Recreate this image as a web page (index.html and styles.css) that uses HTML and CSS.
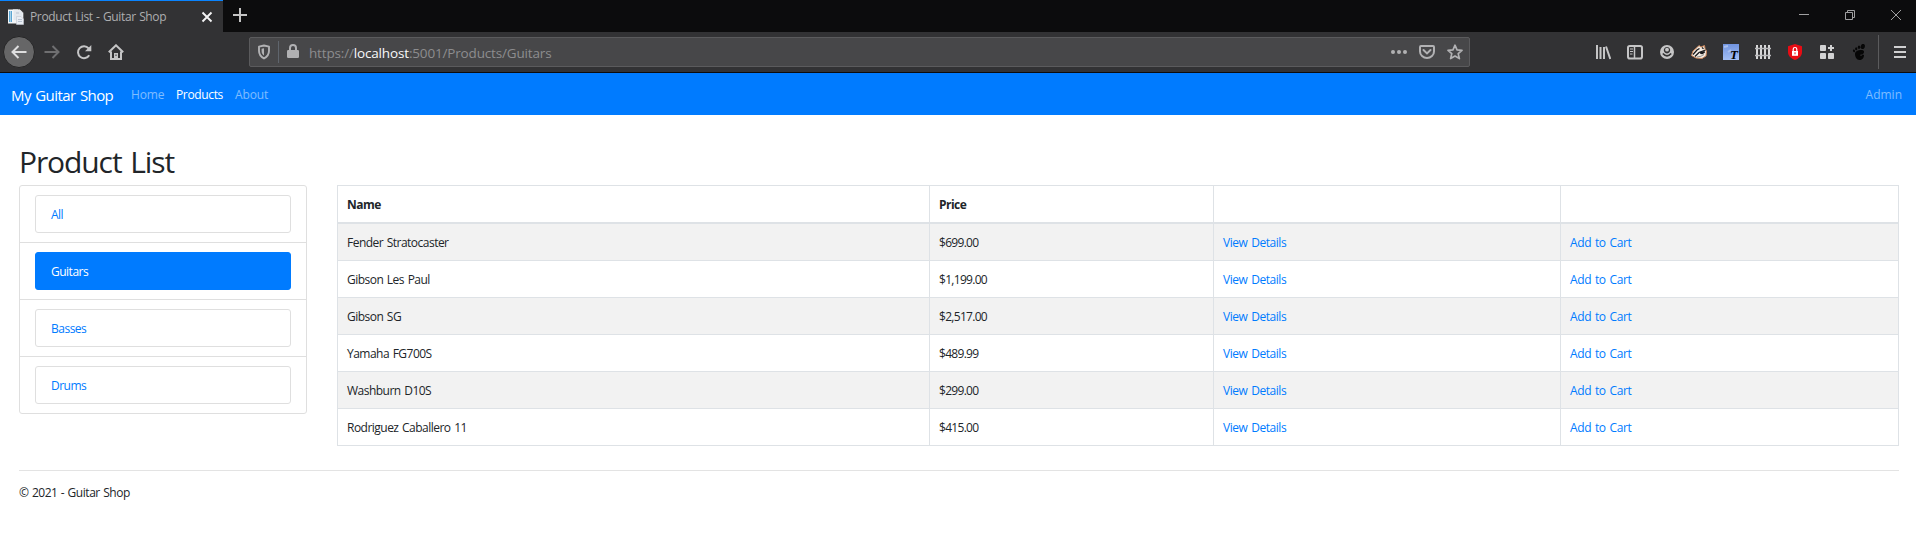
FILE: index.html
```
<!DOCTYPE html>
<html lang="en">
<head>
<meta charset="utf-8">
<title>Product List - Guitar Shop</title>
<link rel="stylesheet" href="styles.css">
</head>
<body>
<header class="browser">
  <div class="tabs">
    <div class="tab">
      <svg class="favicon" width="16" height="16" viewBox="0 0 16 16"><path fill="#f3f6f8" d="M0 .5h10v14H0z"/><path fill="#5aa5d2" d="M1 2h3v11H1z"/><path fill="#a6d0e8" d="M2 2h1v11H2z"/><path fill="#e3e8ee" stroke="#fff" stroke-width=".6" d="M5 .8h7l3 3v8H5z"/><path fill="#e9edf3" stroke="#c2c8d2" stroke-width=".6" d="M8.500 7.500H13l2.500 2.500v5.500h-7z"/><path stroke="#b7c2d1" d="M8 4h3M10 10.500h4M10 12.500h4"/></svg>
      <span class="tab-title">Product List - Guitar Shop</span>
      <svg class="tab-close" width="12" height="12" viewBox="0 0 12 12"><path d="M1.500 1.500l9 9M10.500 1.500l-9 9" stroke="#f4f4f5" stroke-width="1.900"/></svg>
    </div>
    <svg class="new-tab" width="14" height="14" viewBox="0 0 14 14"><path d="M7 0v14M0 7h14" stroke="#c4c4c4" stroke-width="2"/></svg>
    <div class="window-buttons">
      <svg width="12" height="12" viewBox="0 0 12 12"><path d="M1 5.500h10"/></svg>
      <svg width="12" height="12" viewBox="0 0 12 12"><path d="M1.500 3.500h7v7h-7zM3.500 3.500v-2h7v7h-2"/></svg>
      <svg width="12" height="12" viewBox="0 0 12 12"><path d="M1 1l10 10M11 1L1 11"/></svg>
    </div>
  </div>
  <div class="toolbar">
    <div class="nav-buttons">
      <span class="back"><svg width="16" height="16" viewBox="0 0 16 16"><path d="M15.500 8H1.500M7.500 2L1.500 8l6 6"/></svg></span>
      <svg class="forward" width="16" height="16" viewBox="0 0 16 16"><path d="M.5 8h14M8.500 2l6 6-6 6"/></svg>
      <svg width="16" height="16" viewBox="0 0 16 16"><path d="M13.200 11.200A6 6 0 1 1 12.600 4.300"/><path d="M15.300 1v6.300H9z" fill="#c5c5c6" stroke="none"/></svg>
      <svg width="16" height="16" viewBox="0 0 16 16"><path d="M.8 8.300L8 1.300l7.200 7M3 7.500V15h10V7.500"/><path d="M6 9h4v6H6z" fill="#c5c5c6" stroke="none"/><path d="M7.500 10.500h1v1.500h-1z" fill="#323234" stroke="none"/></svg>
    </div>
    <div class="urlbar">
      <svg class="tracking" width="14" height="16" viewBox="0 0 14 16"><path d="M7 1.500L2 2.700v4C2 10.500 3.800 12.700 7 14.500c3.200-1.800 5-4 5-7.800v-4z" fill="none" stroke="#b1b1b3" stroke-width="1.900" stroke-linejoin="round"/><path d="M7 4.200L4.600 4.800v2.300C4.600 9.300 5.500 10.500 7 11.600z" fill="#b1b1b3"/></svg>
      <span class="url-divider"></span>
      <svg class="lock" width="12" height="14" viewBox="0 0 12 14"><rect y="6" width="12" height="8" rx="1.200" fill="#b1b1b3"/><path d="M3 7V4a3 3 0 0 1 6 0v3" fill="none" stroke="#b1b1b3" stroke-width="2"/></svg>
      <span class="url">https://<b>localhost</b>:5001/Products/Guitars</span>
      <div class="page-actions">
        <svg width="16" height="16" viewBox="0 0 16 16"><g fill="#b1b1b3" stroke="none"><circle cx="2" cy="8" r="2"/><circle cx="8" cy="8" r="2"/><circle cx="14" cy="8" r="2"/></g></svg>
        <svg width="16" height="16" viewBox="0 0 16 16"><path d="M2 2h12q1 0 1 1v4.500a7 6.500 0 0 1-14 0V3q0-1 1-1z"/><path d="M4.500 6L8 9.400 11.500 6" stroke-linecap="round"/></svg>
        <svg width="16" height="16" viewBox="0 0 16 16"><path d="M8 1.200l2 4.600 5 .5-3.800 3.300L12.400 14.600 8 12l-4.400 2.600L4.800 9.600 1 6.300l5-.5z" stroke-linejoin="round" stroke-width="1.700"/></svg>
      </div>
    </div>
    <div class="extensions">
      <svg width="16" height="16" viewBox="0 0 16 16"><path d="M2 1v14M5.500 3v12M9 3v12M11 2.500L15.300 15"/></svg>
      <svg width="16" height="16" viewBox="0 0 16 16"><rect x="1" y="2" width="14" height="12.500" rx="1.800"/><path d="M7.500 2v12.500" stroke-width="1.500"/><path d="M3 5h3M3 7.500h3M3 10h2.500" stroke-width="1.200"/></svg>
      <svg width="16" height="16" viewBox="0 0 16 16"><circle cx="8" cy="8" r="7" fill="#c5c5c6" stroke="none"/><circle cx="8" cy="6.200" r="2.700" fill="none" stroke="#323234" stroke-width="0"/><path d="M5 3.900a3.200 3.200 0 1 0 6 0 3.200 3.200 0 0 0-6 0z" fill="#323234" stroke="none" transform="translate(0 1.200)"/><circle cx="8" cy="5.700" r="1.900" fill="#c5c5c6" stroke="none"/><path d="M3.800 9.500q4.200 4.800 8.400 0" stroke="#323234" stroke-width="1.600"/></svg>
      <svg width="16" height="16" viewBox="0 0 16 16"><path d="M.5 11.500L2 7 6 3.500 8 1.500 10 3l3.500-1.500L14 4.500 15.500 7l-.5 5-4 2.500L5 14z" fill="#f3ebe2" stroke="#c78256" stroke-width="1"/><path d="M2 10.500L6 6 8.500 4.500M4 12.500L8 8.500 14.500 6M11 3.500l1.500 1.200" stroke="#18181a" stroke-width="1.300"/><path d="M8.500 8L13.500 7l.5 1.500-2.500 1.700-2-.2z" fill="#18181a" stroke="none"/><path d="M6 13l4-.8 3-1.700" stroke="#777" stroke-width=".8"/></svg>
      <svg class="translate" width="16" height="16" viewBox="0 0 16 16"><defs><linearGradient id="sky" x1="0" y1="0" x2="0" y2="1"><stop offset="0" stop-color="#7194e0"/><stop offset="1" stop-color="#a3bff5"/></linearGradient></defs><path d="M0 0h16v16H0z" fill="url(#sky)" stroke="none"/><path d="M1 3l4-1M5 8l3-2" stroke="#a9c0ef" stroke-width="2"/><text x="7" y="15" class="glyph">T</text></svg>
      <svg width="16" height="16" viewBox="0 0 16 16"><path d="M2 1v14M6 1v14M10 1v14M14 1v14" stroke="#d7d7d8" stroke-width="2"/><path d="M0 4.500h16M0 11.500h16" stroke="#b9b9bb" stroke-width="1.500"/></svg>
      <svg width="16" height="16" viewBox="0 0 16 16"><path d="M8 0l7 2.300V8c0 4-3 6.500-7 8-4-1.500-7-4-7-8V2.300z" fill="#e80c14" stroke="none"/><path d="M5 7h6v4.800H5z" fill="#fff" stroke="none"/><path d="M6.200 7V5.300a1.800 1.800 0 0 1 3.600 0V7" stroke="#fff" stroke-width="1.200"/><path d="M8 8.300v2" stroke="#e80c14" stroke-width="1"/></svg>
      <svg width="16" height="16" viewBox="0 0 16 16"><g fill="#d2d2d3" stroke="none"><rect x="1" y="1" width="6" height="6" rx=".8"/><rect x="1" y="9" width="6" height="6" rx=".8"/><rect x="9" y="9" width="6" height="6" rx=".8"/></g><path d="M12 1v6M9 4h6" stroke="#d2d2d3" stroke-width="2"/></svg>
      <svg width="16" height="16" viewBox="0 0 16 16"><g fill="#060606" stroke="none"><ellipse cx="11.800" cy="2.500" rx="2" ry="2.600" transform="rotate(20 11.800 2.500)"/><ellipse cx="8" cy="3.300" rx="1.200" ry="1.700"/><ellipse cx="5.200" cy="4.800" rx="1.100" ry="1.500"/><ellipse cx="3" cy="6.900" rx="1" ry="1.400" transform="rotate(-20 3 6.900)"/><path d="M4 10c0-3 4-4.300 7-4 3 .4 2.300 3.500.4 4.300-1 .5-2.200.1-2.200.9 0 1 1.800.6 2.500-.7l1.300.5C13 14 11 16 8.500 16 5.500 16 4 12.500 4 10z"/></g></svg>
    </div>
    <span class="toolbar-divider"></span>
    <svg class="menu" width="12" height="12" viewBox="0 0 12 12"><path d="M0 1h12M0 6h12M0 11h12" stroke="#d0d0d1" stroke-width="2"/></svg>
  </div>
</header>

<nav class="navbar">
  <a class="brand">My Guitar Shop</a>
  <a class="nav-link home">Home</a>
  <a class="nav-link products active">Products</a>
  <a class="nav-link">About</a>
  <a class="nav-link admin">Admin</a>
</nav>

<main class="page">
  <h1 class="heading">Product List</h1>
  <div class="content">
    <ul class="categories">
      <li class="category"><a class="category-link">All</a></li>
      <li class="category"><a class="category-link selected">Guitars</a></li>
      <li class="category"><a class="category-link">Basses</a></li>
      <li class="category"><a class="category-link">Drums</a></li>
    </ul>
    <table class="products-table">
      <colgroup><col class="col-name"><col class="col-price"><col class="col-view"><col></colgroup>
      <thead><tr><th>Name</th><th>Price</th><th></th><th></th></tr></thead>
      <tbody>
        <tr><td>Fender Stratocaster</td><td class="price">$699.00</td><td class="view">View Details</td><td class="add">Add to Cart</td></tr>
        <tr><td>Gibson Les Paul</td><td class="price">$1,199.00</td><td class="view">View Details</td><td class="add">Add to Cart</td></tr>
        <tr><td>Gibson SG</td><td class="price">$2,517.00</td><td class="view">View Details</td><td class="add">Add to Cart</td></tr>
        <tr><td>Yamaha FG700S</td><td class="price">$489.99</td><td class="view">View Details</td><td class="add">Add to Cart</td></tr>
        <tr><td>Washburn D10S</td><td class="price">$299.00</td><td class="view">View Details</td><td class="add">Add to Cart</td></tr>
        <tr><td>Rodriguez Caballero 11</td><td class="price">$415.00</td><td class="view">View Details</td><td class="add">Add to Cart</td></tr>
      </tbody>
    </table>
  </div>
  <footer class="footer">© 2021 - Guitar Shop</footer>
</main>
</body>
</html>
```
FILE: styles.css
```
* { box-sizing: border-box; }
body { margin: 0; background: #fff; color: #212529; font: 12px/18px "Open Sans", "Noto Sans", sans-serif; overflow: hidden; }
svg { display: block; flex: none; }

/* Browser window */
.browser { height: 73px; background: #323234; border-bottom: 1px solid #0c0c0d; }
.tabs { display: flex; align-items: center; height: 32px; background: #0c0c0d; }
.tab { display: flex; align-items: center; width: 223px; height: 32px; padding-left: 8px; background: #323234; border-top: 1px solid #0a84ff; }
.tab-title { width: 170px; margin-left: 6px; color: #aeaeb0; letter-spacing: -.36px; word-spacing: .6px; white-space: nowrap; }
.tab-close { margin-left: 8px; margin-right: 10px; }
.favicon { margin-top: 1px; }
.new-tab { margin: 0 0 2px 10px; }
.window-buttons { display: flex; gap: 34px; margin: 0 14px 2px auto; fill: none; stroke: #a0a0a1; stroke-width: 1; }
.toolbar { display: flex; align-items: center; height: 40px; padding-left: 3px; }
.nav-buttons { display: flex; align-items: center; gap: 16px; width: 246px; fill: none; stroke: #c5c5c6; stroke-width: 2; }
.back { display: flex; align-items: center; justify-content: center; width: 32px; height: 32px; margin-right: -7px; border-radius: 50%; background: #666667; border: 1px solid #252526; stroke: #dededf; }
.forward { stroke: #6f6f71; }
.urlbar { display: flex; align-items: center; width: 1221px; height: 30px; padding: 0 6px 0 7px; background: #474749; border: 1px solid #5b5b5d; border-radius: 2px; }
.url-divider { width: 1px; height: 22px; margin: 0 8px 0 7px; background: #5f656d; }
.lock { margin-bottom: 2px; }
.url { margin-left: 10px; padding-top: 2px; color: #8d8d8f; font-size: 13.500px; letter-spacing: -.16px; }
.url b { color: #f9f9fa; font-weight: 400; }
.page-actions { display: flex; gap: 12px; margin-left: auto; fill: none; stroke: #b1b1b3; stroke-width: 2; }
.extensions { display: flex; gap: 16px; margin-left: 125px; fill: none; stroke: #c5c5c6; stroke-width: 2; }
.glyph { fill: #000; stroke: none; font: italic bold 13px "Liberation Serif", serif; }
.toolbar-divider { width: 1px; height: 34px; margin: 0 15px 0 11px; background: #5b5b5d; }

/* Site navigation */
.navbar { display: flex; align-items: center; height: 42px; padding: 2px 14px 0 11px; background: #007bff; white-space: nowrap; }
.brand { width: 120px; margin-bottom: 1px; color: #fff; font-size: 15px; letter-spacing: -.6px; word-spacing: 1.200px; }
.nav-link { color: rgba(255, 255, 255, .5); letter-spacing: -.15px; }
.home { width: 45px; }
.products { width: 59px; letter-spacing: -.35px; }
.products.active { color: #fff; }
.admin { margin-left: auto; letter-spacing: 0; }

/* Page */
.page { padding: 29px 17px 0 19px; }
.heading { margin: 0 0 5px; font-size: 30px; line-height: 36px; font-weight: 400; letter-spacing: -1.100px; word-spacing: 2px; }
.content { display: flex; align-items: flex-start; gap: 30px; }
.categories { width: 288px; margin: 0; padding: 0; list-style: none; border: 1px solid #dfdfdf; border-radius: 3px; }
.category { padding: 9px 15px; }
.category + .category { border-top: 1px solid #dfdfdf; }
.category-link { display: block; height: 38px; padding: 10px 15px 8px; border: 1px solid #dfdfdf; border-radius: 3px; color: #007bff; letter-spacing: -.5px; }
.category-link.selected { background: #007bff; border-color: #007bff; color: #fff; }
.products-table { flex: 1; table-layout: fixed; border-collapse: separate; border-spacing: 0; border-top: 1px solid #dee2e6; border-left: 1px solid #dee2e6; letter-spacing: -.52px; word-spacing: 1px; }
.products-table th, .products-table td { padding: 10px 9px 8px; text-align: left; border-right: 1px solid #dee2e6; border-bottom: 1px solid #dee2e6; }
.products-table th { height: 38px; border-bottom-width: 2px; }
.products-table tbody tr:nth-child(odd) { background: #f2f2f2; }
.col-name { width: 592px; }
.col-price { width: 284px; }
.col-view { width: 347px; }
.products-table .price { letter-spacing: -.7px; }
.view, .add { color: #007bff; }
.products-table .view { letter-spacing: -.44px; }
.products-table .add { letter-spacing: -.36px; }
.footer { margin-top: 24px; padding-top: 13px; border-top: 1px solid #e3e3e3; letter-spacing: -.46px; word-spacing: .7px; }
```
